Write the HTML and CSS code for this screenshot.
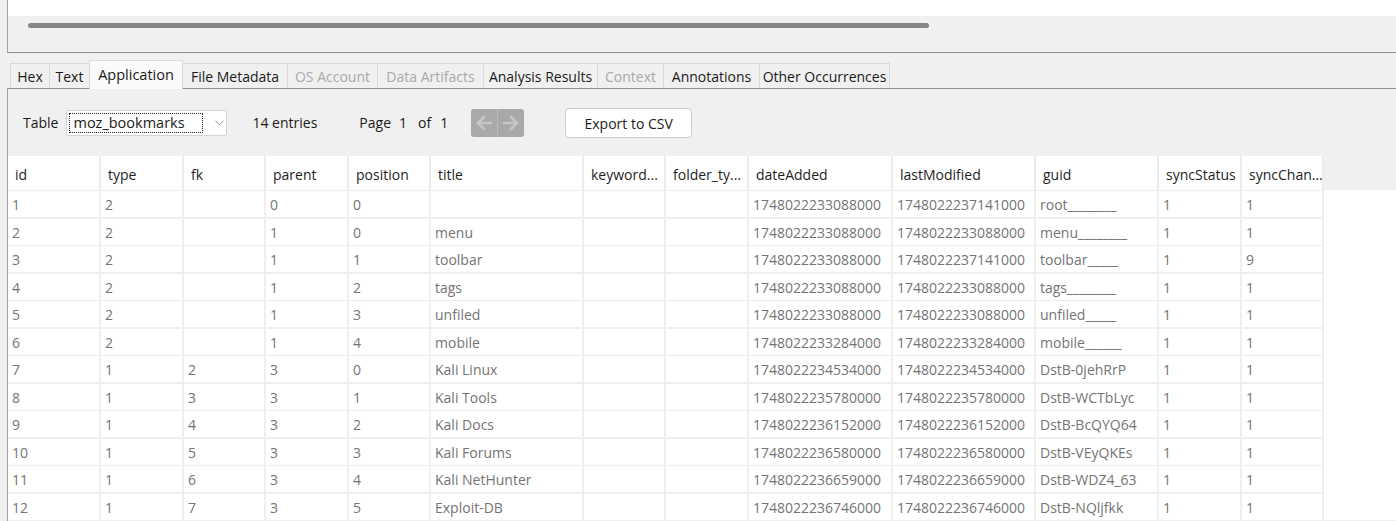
FILE: index.html
```html
<!DOCTYPE html>
<html>
<head>
<meta charset="utf-8">
<link rel="stylesheet" href="styles.css">
</head>
<body>
<div class="top">
  <div class="top-white"></div>
  <div class="top-scroll"><div class="thumb"></div></div>
</div>
<div class="tabs">
  <div class="tab t-hex">Hex</div>
  <div class="tab t-text">Text</div>
  <div class="tab sel t-app">Application</div>
  <div class="tab t-fm">File Metadata</div>
  <div class="tab dis t-os">OS Account</div>
  <div class="tab dis t-da">Data Artifacts</div>
  <div class="tab t-ar">Analysis Results</div>
  <div class="tab dis t-ctx">Context</div>
  <div class="tab t-ann">Annotations</div>
  <div class="tab t-oo">Other Occurrences</div>
</div>
<div class="panel">
  <div class="toolbar">
    <span class="lbl">Table</span>
    <div class="combo"><span class="combo-text">moz_bookmarks</span>
      <svg class="chev" width="9" height="6" viewBox="0 0 9 6"><path d="M0.5 0.8 L4.5 4.8 L8.5 0.8" fill="none" stroke="#8a8a8a" stroke-width="1"/></svg>
    </div>
    <span class="entries">14 entries</span>
    <span class="page"><span>Page</span><span class="pn">1</span><span class="of">of</span><span class="pt">1</span></span>
    <div class="nav">
      <div class="nav-btn"><svg width="18" height="16" viewBox="0 0 18 16"><path d="M16 8 H3 M9 2 L3 8 L9 14" fill="none" stroke="#c6c6c6" stroke-width="2.6" stroke-linecap="round" stroke-linejoin="round"/></svg></div>
      <div class="nav-btn"><svg width="18" height="16" viewBox="0 0 18 16"><path d="M2 8 H15 M9 2 L15 8 L9 14" fill="none" stroke="#c6c6c6" stroke-width="2.6" stroke-linecap="round" stroke-linejoin="round"/></svg></div>
    </div>
    <button class="export">Export to CSV</button>
  </div>
  <div class="gridwrap">
    <table class="grid">
      <colgroup>
        <col class="w92"><col class="w83"><col class="w82"><col class="w83"><col class="w82"><col class="w153"><col class="w82"><col class="w83"><col class="w144"><col class="w143"><col class="w123"><col class="w83"><col class="w82">
      </colgroup>
      <thead>
        <tr><th>id</th><th>type</th><th>fk</th><th>parent</th><th>position</th><th>title</th><th>keyword...</th><th>folder_ty...</th><th>dateAdded</th><th>lastModified</th><th>guid</th><th>syncStatus</th><th>syncChan...</th></tr>
      </thead>
      <tbody>
        <tr><td>1</td><td>2</td><td></td><td>0</td><td>0</td><td></td><td></td><td></td><td>1748022233088000</td><td>1748022237141000</td><td>root________</td><td>1</td><td>1</td></tr>
        <tr><td>2</td><td>2</td><td></td><td>1</td><td>0</td><td>menu</td><td></td><td></td><td>1748022233088000</td><td>1748022233088000</td><td>menu________</td><td>1</td><td>1</td></tr>
        <tr><td>3</td><td>2</td><td></td><td>1</td><td>1</td><td>toolbar</td><td></td><td></td><td>1748022233088000</td><td>1748022237141000</td><td>toolbar_____</td><td>1</td><td>9</td></tr>
        <tr><td>4</td><td>2</td><td></td><td>1</td><td>2</td><td>tags</td><td></td><td></td><td>1748022233088000</td><td>1748022233088000</td><td>tags________</td><td>1</td><td>1</td></tr>
        <tr><td>5</td><td>2</td><td></td><td>1</td><td>3</td><td>unfiled</td><td></td><td></td><td>1748022233088000</td><td>1748022233088000</td><td>unfiled_____</td><td>1</td><td>1</td></tr>
        <tr><td>6</td><td>2</td><td></td><td>1</td><td>4</td><td>mobile</td><td></td><td></td><td>1748022233284000</td><td>1748022233284000</td><td>mobile______</td><td>1</td><td>1</td></tr>
        <tr><td>7</td><td>1</td><td>2</td><td>3</td><td>0</td><td>Kali Linux</td><td></td><td></td><td>1748022234534000</td><td>1748022234534000</td><td>DstB-0jehRrP</td><td>1</td><td>1</td></tr>
        <tr><td>8</td><td>1</td><td>3</td><td>3</td><td>1</td><td>Kali Tools</td><td></td><td></td><td>1748022235780000</td><td>1748022235780000</td><td>DstB-WCTbLyc</td><td>1</td><td>1</td></tr>
        <tr><td>9</td><td>1</td><td>4</td><td>3</td><td>2</td><td>Kali Docs</td><td></td><td></td><td>1748022236152000</td><td>1748022236152000</td><td>DstB-BcQYQ64</td><td>1</td><td>1</td></tr>
        <tr><td>10</td><td>1</td><td>5</td><td>3</td><td>3</td><td>Kali Forums</td><td></td><td></td><td>1748022236580000</td><td>1748022236580000</td><td>DstB-VEyQKEs</td><td>1</td><td>1</td></tr>
        <tr><td>11</td><td>1</td><td>6</td><td>3</td><td>4</td><td>Kali NetHunter</td><td></td><td></td><td>1748022236659000</td><td>1748022236659000</td><td>DstB-WDZ4_63</td><td>1</td><td>1</td></tr>
        <tr><td>12</td><td>1</td><td>7</td><td>3</td><td>5</td><td>Exploit-DB</td><td></td><td></td><td>1748022236746000</td><td>1748022236746000</td><td>DstB-NQljfkk</td><td>1</td><td>1</td></tr>
      </tbody>
    </table>
  </div>
</div>
</body>
</html>
```

FILE: styles.css
```css
html, body {
  margin: 0;
  padding: 0;
}
body {
  width: 1396px;
  height: 521px;
  overflow: hidden;
  background: #f0f0f0;
  font-family: "Open Sans", "Noto Sans", sans-serif;
  font-size: 14px;
  color: #1a1a1a;
}
.top {
  margin-left: 7px;
  border-left: 1px solid #a3a3a3;
  border-bottom: 1px solid #8e8e8e;
  height: 52px;
}
.top-white {
  height: 16px;
  background: #ffffff;
}
.top-scroll {
  height: 36px;
  padding-top: 7px;
  box-sizing: border-box;
}
.thumb {
  margin-left: 20px;
  width: 901px;
  height: 5px;
  border-radius: 3px;
  background: #878787;
}
.tabs {
  display: flex;
  align-items: flex-end;
  height: 35px;
  margin-left: 10px;
  position: relative;
  z-index: 2;
}
.tab {
  height: 25px;
  box-sizing: border-box;
  padding: 1px 0 0 0;
  border-top: 1px solid #dadada;
  border-left: 1px solid #dadada;
  background: #f0f0f0;
  line-height: 23px;
  text-align: center;
  white-space: nowrap;
}
.tab:last-child {
  border-right: 1px solid #dadada;
}
.tab.sel {
  height: 29px;
  margin-bottom: -1px;
  padding-top: 0;
  background: #fafafa;
  font-size: 14.5px;
  line-height: 27px;
  border-right: 1px solid #dadada;
}
.tab.sel + .tab {
  border-left: none;
}
.tab.dis {
  color: #a9a9a9;
}
.t-hex { width: 39px; }
.t-text { width: 40px; }
.t-app { width: 94px; }
.t-fm { width: 104px; }
.t-os { width: 90px; }
.t-da { width: 106px; }
.t-ar { width: 114px; }
.t-ctx { width: 66px; }
.t-ann { width: 96px; }
.t-oo { width: 131px; }
.panel {
  margin-left: 7px;
  border-left: 1px solid #a3a3a3;
  border-top: 1px solid #8e8e8e;
  height: 432px;
  position: relative;
  z-index: 1;
}
.toolbar {
  display: flex;
  align-items: center;
  height: 67px;
  padding-left: 15px;
}
.lbl {
  margin-right: 8px;
}
.combo {
  width: 161px;
  height: 26px;
  box-sizing: border-box;
  background: #ffffff;
  border: 1px solid #d3d3d3;
  border-radius: 2px;
  display: flex;
  align-items: center;
  padding-left: 2px;
}
.combo-text {
  width: 134px;
  height: 20px;
  box-sizing: border-box;
  border: 1px dotted #222;
  line-height: 18px;
  padding-left: 3px;
  font-size: 14.5px;
}
.chev {
  margin-left: 12px;
}
.entries {
  margin-left: 25px;
}
.page {
  margin-left: 42px;
  display: flex;
}
.pn { margin-left: 8px; }
.of { margin-left: 11px; }
.pt { margin-left: 9px; }
.nav {
  margin-left: 23px;
  display: flex;
  width: 53px;
  height: 28px;
  border-radius: 3px;
  background: #a9a9a9;
  overflow: hidden;
}
.nav-btn {
  flex: 1;
  display: flex;
  align-items: center;
  justify-content: center;
}
.nav-btn + .nav-btn {
  border-left: 1px solid #b8b8b8;
}
.export {
  margin-left: 41px;
  width: 127px;
  height: 30px;
  background: #ffffff;
  border: 1px solid #cdcdcd;
  border-radius: 4px;
  font-family: inherit;
  font-size: 14px;
  color: #1a1a1a;
  padding: 0;
  margin-top: 1px;
}
.gridwrap {
  height: 364px;
  background: linear-gradient(#f0f0f0 0, #f0f0f0 34px, #ffffff 34px);
  overflow: hidden;
}
.grid {
  border-collapse: collapse;
  table-layout: fixed;
  width: 1315px;
}
.w92 { width: 92px; }
.w83 { width: 83px; }
.w82 { width: 82px; }
.w153 { width: 153px; }
.w144 { width: 144px; }
.w143 { width: 143px; }
.w123 { width: 123px; }
.grid th {
  height: 32px;
  padding: 2px 0 0 7px;
  text-align: left;
  font-weight: normal;
  color: #1e1e1e;
  background: #ffffff;
  border-right: 2px solid #ececec;
  white-space: nowrap;
  overflow: hidden;
}
.grid td {
  padding: 0 0 0 4px;
  color: #747474;
  border-right: 2px solid #efefef;
  white-space: nowrap;
  overflow: hidden;
}
.grid tbody tr:nth-child(odd) td {
  height: 26px;
  border-bottom: 2px solid #efefef;
}
.grid tbody tr:nth-child(even) td {
  height: 26px;
  border-bottom: 1px solid #ececec;
}
.grid tbody tr:first-child td {
  border-top: 1px solid #ececec;
}
```
